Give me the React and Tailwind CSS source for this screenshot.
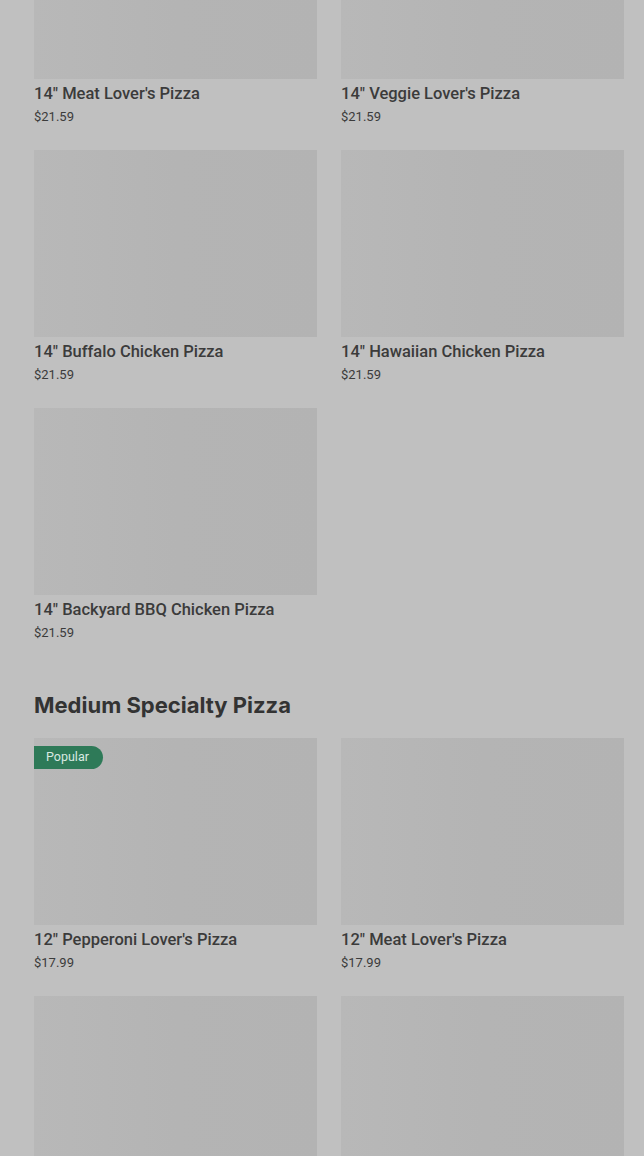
const LARGE = [
  { name: '14" Meat Lover\'s Pizza', price: "$21.59" },
  { name: '14" Veggie Lover\'s Pizza', price: "$21.59" },
  { name: '14" Buffalo Chicken Pizza', price: "$21.59" },
  { name: '14" Hawaiian Chicken Pizza', price: "$21.59" },
  { name: '14" Backyard BBQ Chicken Pizza', price: "$21.59" },
];

// last row is cut off by the viewport, only the pictures show
const MEDIUM = [
  { id: "m1", name: '12" Pepperoni Lover\'s Pizza', price: "$17.99", popular: true },
  { id: "m2", name: '12" Meat Lover\'s Pizza', price: "$17.99" },
  { id: "m3" },
  { id: "m4" },
];

function ItemCard({ item }) {
  return (
    <div>
      <div className="relative h-[187px] bg-gradient-to-r from-[#b8b8b8] via-[#b4b4b4] to-[#b3b3b3]">
        {item.popular && (
          <span className="absolute left-0 top-2 h-[23px] pl-3 pr-[14px] flex items-center bg-[#2e7a58] text-[#d9e9e1] text-[12.5px] rounded-r-full">
            Popular
          </span>
        )}
      </div>
      {item.name && (
        <>
          <p className="pt-px text-[16.5px] leading-[28px] font-medium text-[#3b3b3b]">
            {item.name}
          </p>
          <p className="text-[13px] leading-[17px] text-[#3b3b3b]">
            {item.price}
          </p>
        </>
      )}
    </div>
  );
}

export default function App() {
  return (
    <div
      className="h-[1156px] overflow-hidden bg-[#c0c0c0]"
      style={{ fontFamily: "Roboto, 'Noto Sans', sans-serif" }}
    >
      <div className="-mt-[108px] pl-[34px] pr-[20px]">
        <div className="grid grid-cols-2 gap-x-6 gap-y-[25px]">
          {LARGE.map((item) => (
            <ItemCard key={item.name} item={item} />
          ))}
        </div>

        <h2
          className="mt-12 mb-[17px] text-[22px] leading-[32px] font-bold text-[#333]"
          style={{ fontFamily: "Inter, sans-serif" }}
        >
          Medium Specialty Pizza
        </h2>

        <div className="grid grid-cols-2 gap-x-6 gap-y-[25px]">
          {MEDIUM.map((item) => (
            <ItemCard key={item.id} item={item} />
          ))}
        </div>
      </div>
    </div>
  );
}
